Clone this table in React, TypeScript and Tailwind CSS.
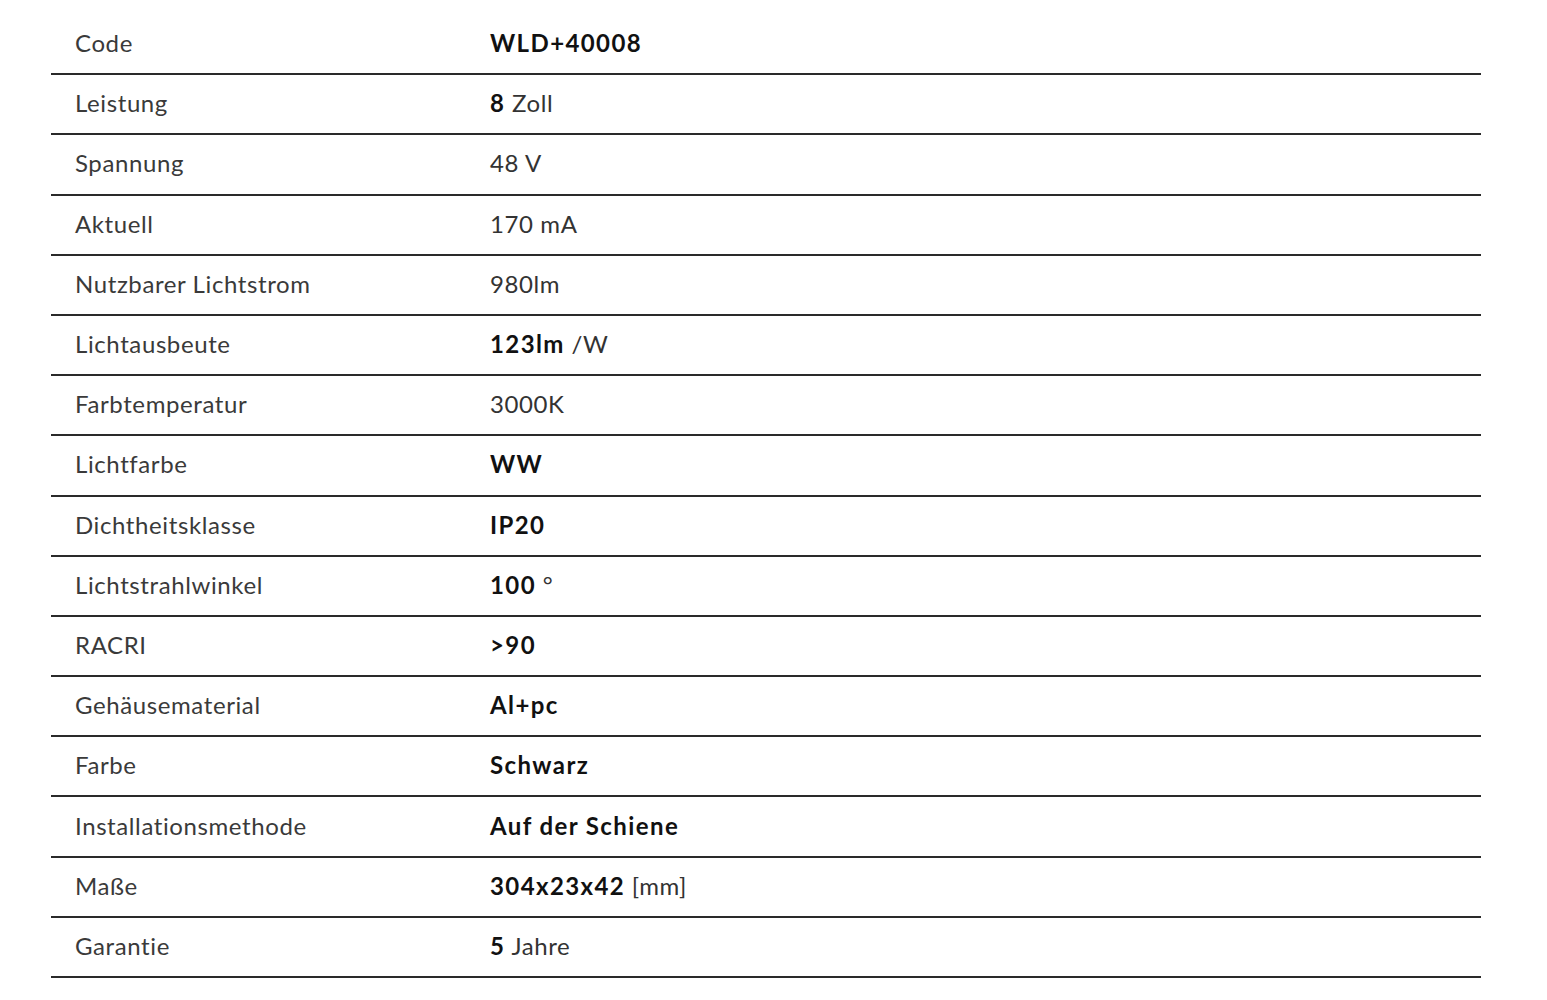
const rows: { label: string; bold?: string; rest?: string }[] = [
  { label: "Code", bold: "WLD+40008" },
  { label: "Leistung", bold: "8", rest: " Zoll" },
  { label: "Spannung", rest: "48 V" },
  { label: "Aktuell", rest: "170 mA" },
  { label: "Nutzbarer Lichtstrom", rest: "980lm" },
  { label: "Lichtausbeute", bold: "123lm", rest: " /W" },
  { label: "Farbtemperatur", rest: "3000K" },
  { label: "Lichtfarbe", bold: "WW" },
  { label: "Dichtheitsklasse", bold: "IP20" },
  { label: "Lichtstrahlwinkel", bold: "100", rest: " °" },
  { label: "RACRI", bold: ">90" },
  { label: "Gehäusematerial", bold: "Al+pc" },
  { label: "Farbe", bold: "Schwarz" },
  { label: "Installationsmethode", bold: "Auf der Schiene" },
  { label: "Maße", bold: "304x23x42", rest: " [mm]" },
  { label: "Garantie", bold: "5", rest: " Jahre" },
];

export default function App() {
  return (
    <div className="min-h-screen bg-white pt-[15px] pl-[51px] pr-[66px] font-['Lato','Noto_Sans',sans-serif]">
      <div className="flex flex-col">
        {rows.map((r) => (
          <div
            key={r.label}
            className="flex h-[60.2px] items-center border-b-2 border-[#2a2a2a] pb-[2px] text-[24px] leading-none tracking-[0.6px]"
          >
            <div className="w-[439px] pl-[24px] text-[#3a3a3a]">{r.label}</div>
            <div className="text-[#333]">
              {r.bold && <span className="font-bold tracking-[1.4px] text-[#111]">{r.bold}</span>}
              {r.rest}
            </div>
          </div>
        ))}
      </div>
    </div>
  );
}
